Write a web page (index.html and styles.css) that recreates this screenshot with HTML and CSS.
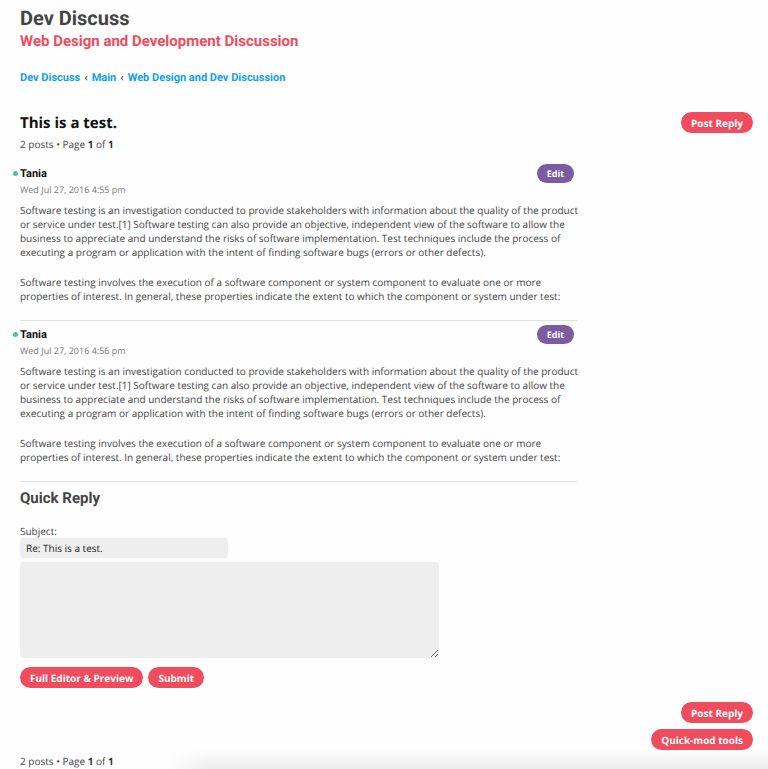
FILE: index.html
```html
<!DOCTYPE html>
<html lang="en">
<head>
<meta charset="utf-8">
<meta name="viewport" content="width=device-width, initial-scale=1">
<title>This is a test. - Dev Discuss</title>
<link rel="stylesheet" href="styles.css">
</head>
<body>
<header class="site-header">
  <h1 class="site-title">Dev Discuss</h1>
  <p class="site-tagline">Web Design and Development Discussion</p>
</header>
<nav class="breadcrumbs">
  <a href="#">Dev Discuss</a><span>‹</span><a href="#">Main</a><span>‹</span><a href="#">Web Design and Dev Discussion</a>
</nav>
<main>
  <div class="topic-bar">
    <h2 class="topic-title">This is a test.</h2>
    <button class="button" type="button">Post Reply</button>
  </div>
  <p class="pagination">2 posts • Page <strong>1</strong> of <strong>1</strong></p>

  <div class="posts">
    <article class="post">
      <div class="post-head">
        <h3 class="author">Tania</h3>
        <button class="button edit" type="button">Edit</button>
      </div>
      <p class="date">Wed Jul 27, 2016 4:55 pm</p>
      <div class="post-body">
        <p>Software testing is an investigation conducted to provide stakeholders with information about the quality of the product or service under test.[1] Software testing can also provide an objective, independent view of the software to allow the business to appreciate and understand the risks of software implementation. Test techniques include the process of executing a program or application with the intent of finding software bugs (errors or other defects).</p>
        <p>Software testing involves the execution of a software component or system component to evaluate one or more properties of interest. In general, these properties indicate the extent to which the component or system under test:</p>
      </div>
    </article>
    <article class="post">
      <div class="post-head">
        <h3 class="author">Tania</h3>
        <button class="button edit" type="button">Edit</button>
      </div>
      <p class="date">Wed Jul 27, 2016 4:56 pm</p>
      <div class="post-body">
        <p>Software testing is an investigation conducted to provide stakeholders with information about the quality of the product or service under test.[1] Software testing can also provide an objective, independent view of the software to allow the business to appreciate and understand the risks of software implementation. Test techniques include the process of executing a program or application with the intent of finding software bugs (errors or other defects).</p>
        <p>Software testing involves the execution of a software component or system component to evaluate one or more properties of interest. In general, these properties indicate the extent to which the component or system under test:</p>
      </div>
    </article>
  </div>

  <form class="quick-reply">
    <h2 class="reply-title">Quick Reply</h2>
    <label for="subject">Subject:</label>
    <input class="field" id="subject" type="text" value="Re: This is a test.">
    <textarea class="field message" id="message" aria-label="Message"></textarea>
    <div class="reply-actions">
      <button class="button" type="button">Full Editor &amp; Preview</button>
      <button class="button" type="submit">Submit</button>
    </div>
  </form>

  <div class="topic-actions">
    <button class="button" type="button">Post Reply</button>
    <button class="button" type="button">Quick-mod tools</button>
  </div>
  <p class="pagination">2 posts • Page <strong>1</strong> of <strong>1</strong></p>
</main>
<div class="edge-shade"></div>
</body>
</html>
```
FILE: styles.css
```css
* { box-sizing: border-box; }

body {
  margin: 0;
  padding: 8px 15px 0 20px;
  background: #fefefe;
  color: #444;
  font: 10px/14px "Open Sans", "Noto Sans", sans-serif;
  text-rendering: geometricPrecision;
}

h1, h2, h3, p { margin: 0; }

.site-title {
  color: #444;
  font: 700 20px/20px Roboto, sans-serif;
}

.site-tagline {
  margin-top: 4px;
  color: #ef4d5e;
  font: 700 15px/18px Roboto, sans-serif;
}

.breadcrumbs {
  display: flex;
  gap: 4px;
  margin-top: 20px;
  font: 700 11px/16px Roboto, sans-serif;
}

.breadcrumbs a {
  color: #109ee8;
  text-decoration: none;
}

.topic-bar {
  display: flex;
  align-items: center;
  justify-content: space-between;
  margin-top: 26px;
}

.topic-title {
  color: #111;
  font: 700 15px/18px "Open Sans", sans-serif;
}

.button {
  height: 21px;
  padding: 0 10px;
  border: 0;
  border-radius: 11px;
  background: #ef4d5e;
  color: #fff;
  font: 700 10px/14px "Open Sans", sans-serif;
  text-rendering: inherit;
  cursor: pointer;
}

.button.edit {
  height: 19px;
  background: #7b5ca3;
  font-size: 9px;
}

.pagination { margin-top: 4px; }

.pagination strong { color: #333; }

.posts {
  width: 76%;
  margin-top: 9px;
}

.post {
  padding: 4px 0 17px;
  border-bottom: 1px solid #e2e2e2;
}

.post-head {
  display: flex;
  align-items: center;
  justify-content: space-between;
  padding-right: 3px;
}

.author {
  position: relative;
  color: #111;
  font: 700 11px/16px Roboto, sans-serif;
}

.author::before {
  position: absolute;
  top: 5px;
  left: -7px;
  width: 5px;
  height: 5px;
  border-radius: 50%;
  background: #4bc985;
  content: "";
}

.date {
  color: #777;
  font-size: 9px;
}

.post-body {
  display: grid;
  gap: 16px;
  margin-top: 6px;
  margin-right: -8px;
}

.quick-reply {
  display: flex;
  flex-direction: column;
  align-items: flex-start;
  margin-top: 6px;
}

.reply-title {
  margin-bottom: 16px;
  font: 700 15px/20px Roboto, sans-serif;
}

.field {
  width: 208px;
  max-width: 100%;
  height: 20px;
  padding: 2px 6px;
  border: 0;
  border-radius: 3px;
  background: #eee;
  color: #222;
  font: inherit;
  text-rendering: inherit;
}

.message {
  width: 419px;
  height: 96px;
  margin-top: 4px;
}

.reply-actions {
  display: flex;
  gap: 5px;
  margin-top: 9px;
}

.topic-actions {
  display: flex;
  flex-direction: column;
  align-items: flex-end;
  gap: 6px;
  margin-top: 14px;
}

/* soft shade rising from the bottom edge of the window */
.edge-shade {
  position: fixed;
  right: 0;
  bottom: 0;
  left: 22%;
  height: 20px;
  background: linear-gradient(to top, rgba(0, 0, 0, 0.07), rgba(0, 0, 0, 0));
  mask-image: linear-gradient(to right, transparent, #000 40px);
  pointer-events: none;
}
```
